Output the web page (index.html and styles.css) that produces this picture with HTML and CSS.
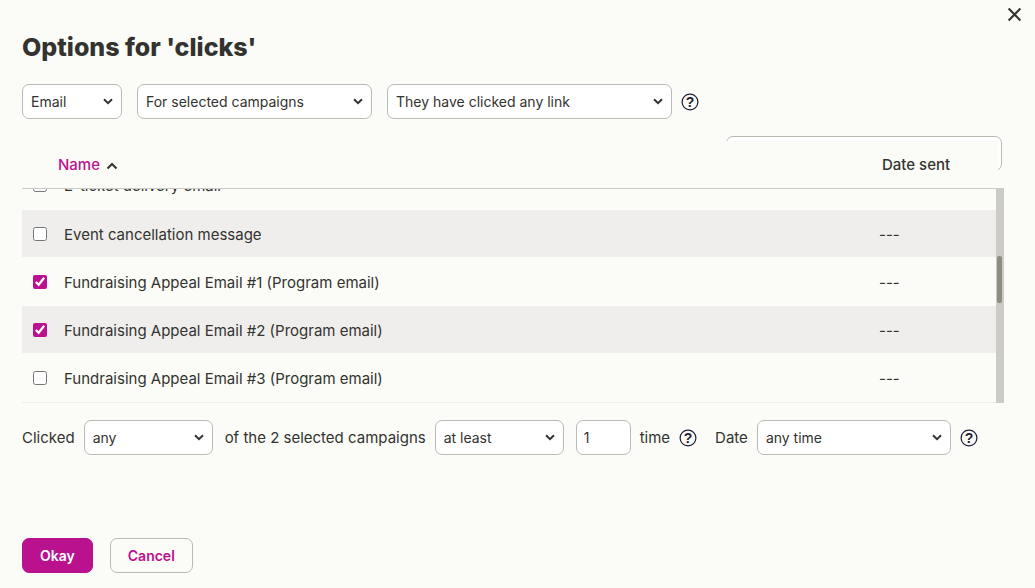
FILE: index.html
```html
<!DOCTYPE html>
<html lang="en">
<head>
  <meta charset="UTF-8" />
  <meta name="viewport" content="width=device-width, initial-scale=1.0"/>
  <title>Options for 'clicks'</title>
  <link rel="stylesheet" href="styles.css">
</head>
<body>

<main class="dialog">
  <button class="close" type="button" aria-label="Close">
    <svg viewBox="0 0 14 14"><path d="M1.5 1.5l11 11M12.5 1.5l-11 11"/></svg>
  </button>

  <h1>Options for 'clicks'</h1>

  <form>
    <div class="filters">
      <select class="type" aria-label="Type">
        <option>Email</option>
      </select>
      <select class="scope" aria-label="Campaigns">
        <option>For selected campaigns</option>
      </select>
      <select class="action" aria-label="Action">
        <option>They have clicked any link</option>
      </select>
      <button class="help" type="button" aria-label="Help">
        <svg viewBox="0 0 18 18"><circle cx="9" cy="9" r="7.9"/><text x="9" y="14">?</text></svg>
      </button>
    </div>

    <!-- Campaign list -->
    <div class="campaigns">
      <input class="search" type="search" aria-label="Search campaigns">
      <table class="list-head">
        <thead>
          <tr>
            <th class="name">
              <a href="#">Name <svg viewBox="0 0 12 8"><path d="M1.5 6.5L6 2l4.5 4.5"/></svg></a>
            </th>
            <th class="date">Date sent</th>
          </tr>
        </thead>
      </table>

      <div class="list">
        <div class="list-view">
          <table class="list-body">
            <tbody>
              <tr>
                <td class="check"><input type="checkbox" id="c1"></td>
                <td><label for="c1">E-ticket delivery email</label></td>
                <td class="date"></td>
              </tr>
              <tr>
                <td class="check"><input type="checkbox" id="c2"></td>
                <td><label for="c2">Event cancellation message</label></td>
                <td class="date">---</td>
              </tr>
              <tr>
                <td class="check"><input type="checkbox" id="c3" checked></td>
                <td><label for="c3">Fundraising Appeal Email #1 (Program email)</label></td>
                <td class="date">---</td>
              </tr>
              <tr>
                <td class="check"><input type="checkbox" id="c4" checked></td>
                <td><label for="c4">Fundraising Appeal Email #2 (Program email)</label></td>
                <td class="date">---</td>
              </tr>
              <tr>
                <td class="check"><input type="checkbox" id="c5"></td>
                <td><label for="c5">Fundraising Appeal Email #3 (Program email)</label></td>
                <td class="date">---</td>
              </tr>
            </tbody>
          </table>
        </div>
        <div class="track"><div class="thumb"></div></div>
      </div>
    </div>

    <div class="criteria">
      <div class="group">
        <label for="match">Clicked</label>
        <select class="match" id="match">
          <option>any</option>
        </select>
      </div>
      <div class="group">
        <label for="compare">of the 2 selected campaigns</label>
        <select class="match" id="compare">
          <option>at least</option>
        </select>
      </div>
      <div class="group">
        <input class="count" id="count" type="text" value="1">
        <label for="count">time</label>
        <button class="help" type="button" aria-label="Help">
          <svg viewBox="0 0 18 18"><circle cx="9" cy="9" r="7.9"/><text x="9" y="14">?</text></svg>
        </button>
      </div>
      <div class="group when">
        <label for="when">Date</label>
        <select id="when">
          <option>any time</option>
        </select>
        <button class="help" type="button" aria-label="Help">
          <svg viewBox="0 0 18 18"><circle cx="9" cy="9" r="7.9"/><text x="9" y="14">?</text></svg>
        </button>
      </div>
    </div>

    <div class="actions">
      <button class="btn primary" type="button">Okay</button>
      <button class="btn" type="button">Cancel</button>
    </div>
  </form>
</main>

</body>
</html>
```
FILE: styles.css
```css
* {
  box-sizing: border-box;
}

body {
  margin: 0;
  background: #fbfcf7;
  color: #33332f;
  font: 15px/20px Inter, "Liberation Sans", sans-serif;
}

.dialog {
  position: relative;
  padding: 31px 31px 15px 22px;
}

h1 {
  margin: 0 0 21px;
  font-size: 25px;
  font-weight: 800;
  line-height: 32px;
}

.close {
  position: absolute;
  top: 7px;
  right: 13px;
  padding: 0;
  border: 0;
  background: none;
  color: #33332f;
  cursor: pointer;
}

.close svg {
  display: block;
  width: 15px;
  height: 15px;
  fill: none;
  stroke: currentColor;
  stroke-width: 2;
}

select, input, .btn {
  height: 35px;
  border: 1px solid #b9bab3;
  border-radius: 7px;
  color: inherit;
  font: inherit;
}

select, input {
  background: #fff;
  font-size: 14px;
}

select {
  padding: 0 26px 0 8px;
  appearance: none;
  background: #fff url("data:image/svg+xml,%3Csvg xmlns='http://www.w3.org/2000/svg' viewBox='0 0 10 7'%3E%3Cpath d='M1 1.2l4 4 4-4' fill='none' stroke='%2333332f' stroke-width='2'/%3E%3C/svg%3E") no-repeat right 8px center / 10px 7px;
}

.help {
  padding: 0;
  border: 0;
  background: none;
  color: #1f1c35;
  cursor: pointer;
}

.help svg {
  display: block;
  width: 18px;
  height: 18px;
}

.help circle {
  fill: none;
  stroke: currentColor;
  stroke-width: 1.2;
}

.help text {
  fill: currentColor;
  font-size: 14px;
  font-weight: 700;
  text-anchor: middle;
}

.filters {
  display: flex;
  align-items: center;
  gap: 15px;
  margin-bottom: 17px;
}

.type { width: 100px; }
.scope { width: 235px; }
.action { width: 285px; }

.filters .help {
  margin-left: -6px;
}

/* Campaign list */
.campaigns {
  display: flex;
  flex-direction: column;
  margin-bottom: 17px;
}

.search {
  align-self: flex-end;
  width: 276px;
  margin: 0 2px -30px 0;
}

/* the header slides over the search box */
.list-head {
  position: relative;
  margin-right: 6px;
  height: 47px;
  background: #fbfcf7;
}

table {
  table-layout: fixed;
  border-collapse: collapse;
}

th {
  padding: 0;
  font-weight: 500;
  text-align: left;
}

th.name {
  padding-left: 36px;
}

th.date {
  width: 116px;
}

th a {
  color: #ba128f;
  text-decoration: none;
}

th svg {
  width: 12px;
  height: 8px;
  margin-left: 2px;
  fill: none;
  stroke: #33332f;
  stroke-width: 2;
}

.list {
  display: flex;
  height: 215px;
}

.list-view {
  display: flex;
  flex: 1;
  align-items: flex-end;
  overflow: hidden;
  border-top: 1px solid #cbcbc6;
  border-bottom: 1px solid #efeeed;
}

.list-body {
  width: 100%;
}

.list-body tr {
  height: 48px;
}

.list-body td {
  padding: 2px 0 0;
  border-bottom: 1px solid #fbfcf7;
}

.list-body tr:nth-child(even) {
  background: #efeeed;
}

.list-body .check {
  width: 42px;
  padding: 0 0 0 11px;
}

.list-body .date {
  width: 117px;
}

input[type="checkbox"] {
  display: block;
  width: 14px;
  height: 14px;
  margin: 0;
  accent-color: #ba128f;
}

.track {
  width: 8px;
  padding: 68px 2px 0 1px;
  background: #cccbc7;
}

.thumb {
  height: 47px;
  border-radius: 2px;
  background: #8f8c84;
}

/* Criteria row */
.criteria {
  display: flex;
  flex-wrap: wrap;
  gap: 12px;
}

.group {
  display: flex;
  align-items: center;
  gap: 9px;
}

.match {
  width: 129px;
}

.count {
  width: 55px;
  padding: 0 7px;
}

.when {
  margin-left: 6px;
}

.when select {
  width: 194px;
}

/* Buttons */
.actions {
  display: flex;
  gap: 17px;
  margin-top: 83px;
}

.btn {
  padding: 0 17px;
  background: none;
  color: #ba128f;
  font-size: 14px;
  font-weight: 600;
  cursor: pointer;
}

.primary {
  border-color: #ba128f;
  background: #ba128f;
  color: #fff;
}
```
